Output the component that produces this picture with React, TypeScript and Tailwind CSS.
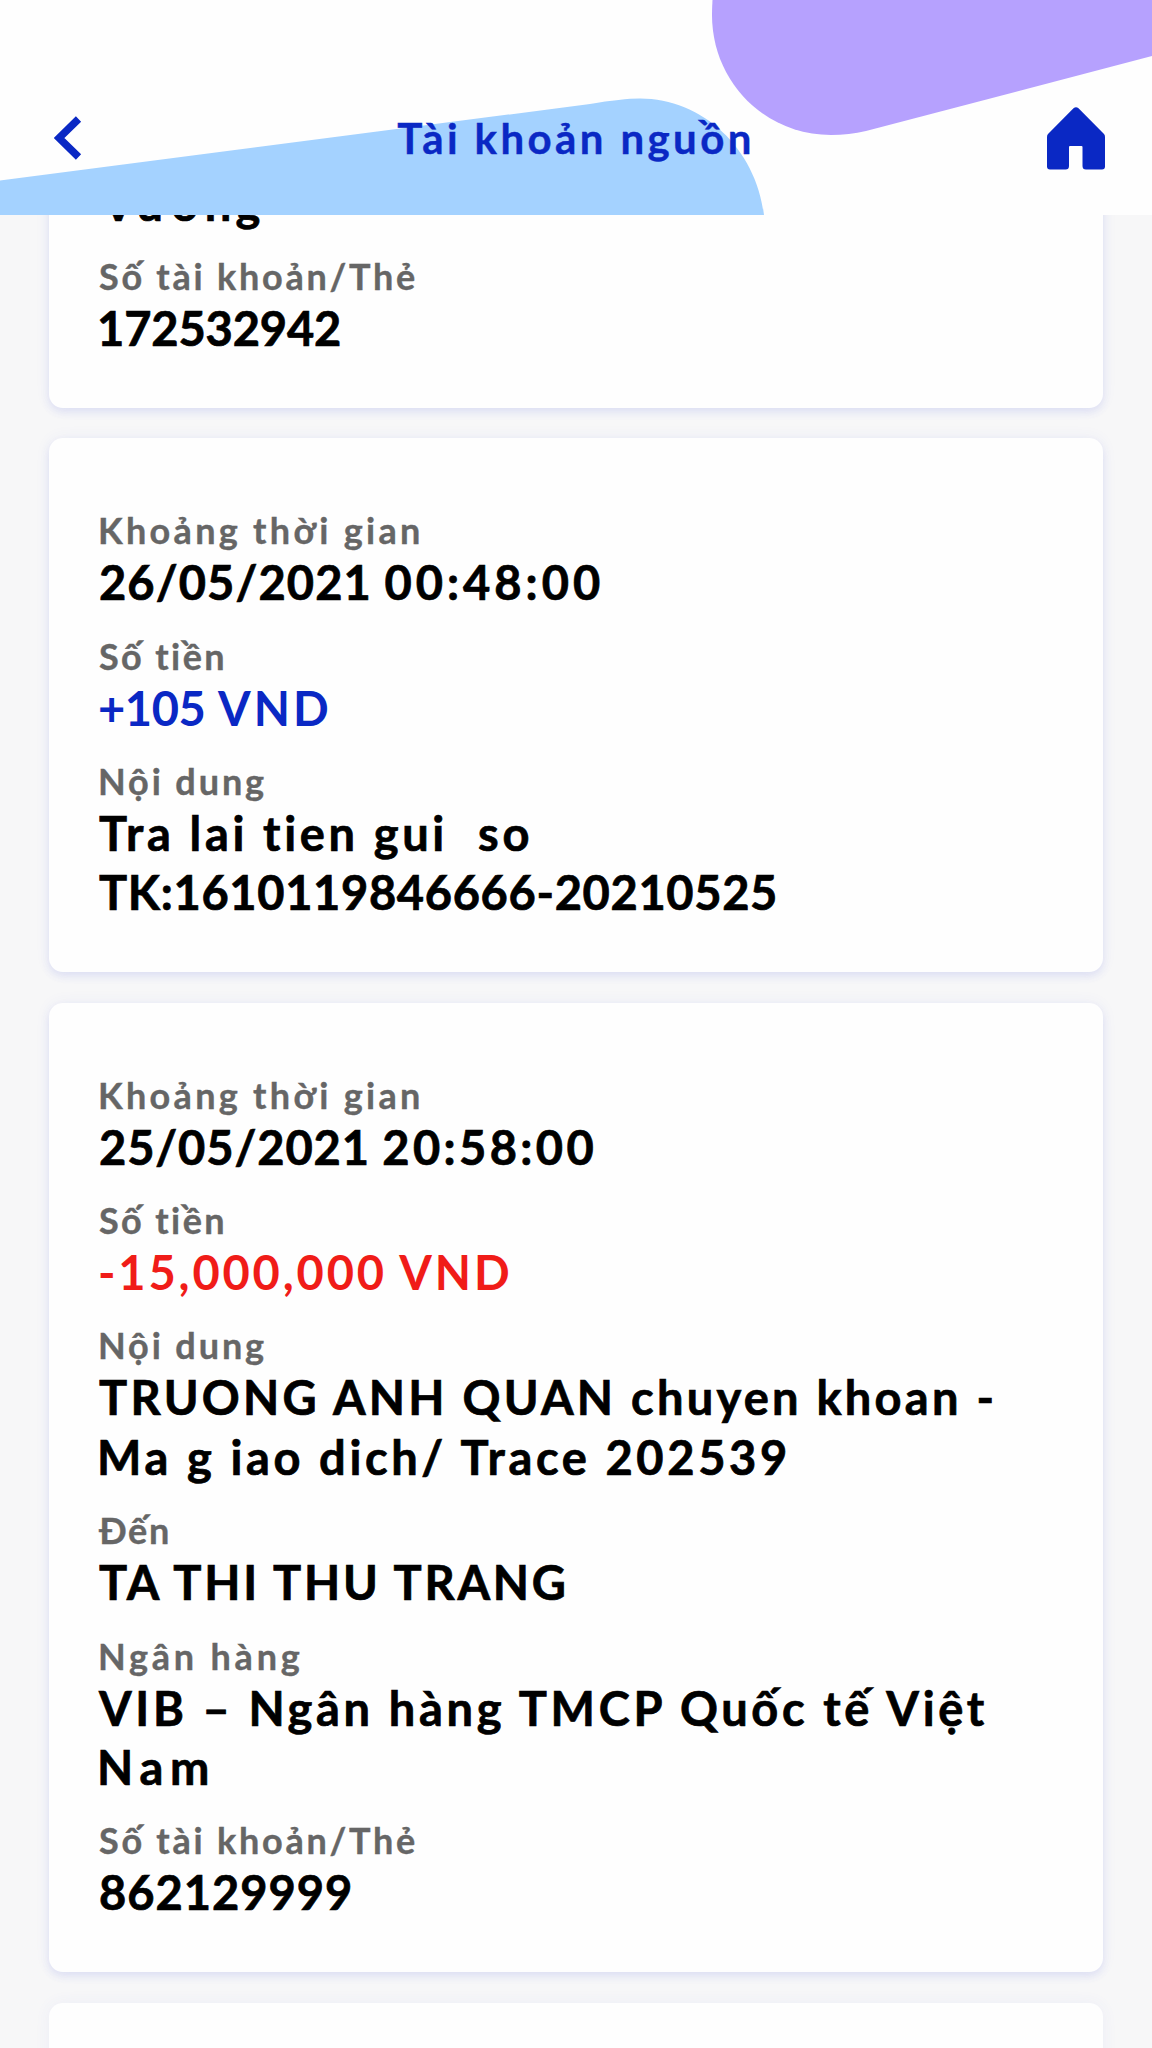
import clsx from 'clsx'

type Line = { text: string; className: string; time?: string; timeClass?: string }

type Field = { label?: string; labelClass?: string; lines: Line[] }

const LABELS = {
  time: { label: 'Khoảng thời gian', labelClass: 'tracking-[3.3px] -ml-px' },
  amount: { label: 'Số tiền', labelClass: 'tracking-[2.4px]' },
  content: { label: 'Nội dung', labelClass: 'tracking-[2.9px] -ml-px' },
  to: { label: 'Đến', labelClass: 'tracking-[1.6px]' },
  bank: { label: 'Ngân hàng', labelClass: 'tracking-[3.8px] -ml-px' },
  account: { label: 'Số tài khoản/Thẻ', labelClass: 'tracking-[2.75px]' },
}

const transactions: Field[][] = [
  [
    { lines: [{ text: 'Vương', className: 'tracking-[4.2px] ml-[3px]' }] },
    { ...LABELS.account, lines: [{ text: '172532942', className: 'tracking-[-0.13px] -ml-[2px]' }] },
  ],
  [
    {
      ...LABELS.time,
      lines: [
        { text: '26/05/2021 ', className: 'tracking-[1.1px]', time: '00:48:00', timeClass: 'tracking-[4px]' },
      ],
    },
    {
      ...LABELS.amount,
      lines: [{ text: '+105', className: 'tracking-[-0.4px] -ml-px text-[#0a28c4]', time: ' VND', timeClass: 'tracking-[3px]' }],
    },
    {
      ...LABELS.content,
      lines: [
        { text: 'Tra lai tien gui  so', className: 'tracking-[3.65px]' },
        { text: 'TK:1610119846666-20210525', className: 'tracking-[0.66px]' },
      ],
    },
  ],
  [
    {
      ...LABELS.time,
      lines: [
        { text: '25/05/2021 ', className: 'tracking-[0.9px]', time: '20:58:00', timeClass: 'tracking-[3.4px]' },
      ],
    },
    {
      ...LABELS.amount,
      lines: [{ text: '-15,000,000 VND', className: 'tracking-[2.84px] -ml-px text-[#f01c18]' }],
    },
    {
      ...LABELS.content,
      lines: [
        { text: 'TRUONG ANH QUAN chuyen khoan -', className: 'tracking-[3.25px]' },
        { text: 'Ma g iao dich/ Trace 202539', className: 'tracking-[3.62px] -ml-[2px]' },
      ],
    },
    { ...LABELS.to, lines: [{ text: 'TA THI THU TRANG', className: 'tracking-[2.8px]' }] },
    {
      ...LABELS.bank,
      lines: [
        { text: 'VIB – Ngân hàng TMCP Quốc tế Việt', className: 'tracking-[3.65px]' },
        { text: 'Nam', className: 'tracking-[6.8px] -ml-[2px]' },
      ],
    },
    { ...LABELS.account, lines: [{ text: '862129999', className: 'tracking-[1px]' }] },
  ],
]

function Header() {
  return (
    <header className="relative z-10 h-[215px] shrink-0 overflow-hidden bg-[#fefefe] pt-[61px] text-[#0a28c4]">
      <svg className="absolute inset-0" width="1152" height="215" viewBox="0 0 1152 215" aria-hidden="true">
        <path d="M0 180.5 L590 104 Q622 98.500 640 98.500 C702 98.500 756 148 764 215 H0 Z" fill="#a4d2ff" />
        <path d="M712.500 0 Q712 8 712 15 C712 82 765 135 831 135 Q849 135 866 131 L1152 56 V0 Z" fill="#b6a1fe" />
      </svg>
      <div className="relative flex h-full items-center justify-between pl-[54px] pr-[47px]">
        <button className="w-[51px]" aria-label="Quay lại">
          <svg width="28" height="44" viewBox="0 0 28 44" fill="none">
            <path d="M24.500 3 L5 22 L24.500 41" stroke="currentColor" strokeWidth="7.500" />
          </svg>
        </button>
        <h1 className="text-[42px] font-bold leading-none tracking-[3.4px] [-webkit-text-stroke:0.4px]">
          Tài khoản nguồn
        </h1>
        <button aria-label="Trang chủ">
          <svg width="58" height="63" viewBox="0 0 58 63" fill="currentColor">
            <path d="M26.500 1.200 Q29 -0.800 31.500 1.200 L57 27 Q58 28.200 58 30 V59.500 Q58 62.500 55 62.500 H39 Q35.500 62.500 35.500 59 V40 Q35.500 39 34.500 39 H23 Q22 39 22 40 V59 Q22 62.500 18.500 62.500 H3 Q0 62.500 0 59.500 V30 Q0 28.200 1 27 Z" />
          </svg>
        </button>
      </div>
    </header>
  )
}

function TransactionCard({ fields, first }: { fields: Field[]; first: boolean }) {
  return (
    <section
      className={clsx(
        'flex flex-col gap-[20.7px] rounded-[14px] bg-[#fefefe] px-[50px] pb-[49.4px] shadow-[0_4px_8px_rgba(70,90,220,0.12),0_0_16px_rgba(70,90,220,0.06)]',
        first ? '-mt-[41.4px]' : 'pt-[70px]',
      )}
    >
      {fields.map((field, i) => (
        <div key={i}>
          {field.label && (
            <p
              className={clsx(
                'mb-px text-[36px] font-bold leading-[44px] text-[#666] [-webkit-text-stroke:0.4px]',
                field.labelClass,
              )}
            >
              {field.label}
            </p>
          )}
          {field.lines.map((line) => (
            <p
              key={line.text}
              className={clsx(
                'whitespace-pre text-[47px] font-bold leading-[59.6px]',
                line.className,
                !line.className.includes('text-[') && 'text-black [-webkit-text-stroke:0.7px]',
              )}
            >
              {line.text}
              {line.time && <span className={line.timeClass}>{line.time}</span>}
            </p>
          ))}
        </div>
      ))}
    </section>
  )
}

export default function App() {
  return (
    <div className="flex h-[2048px] w-[1152px] flex-col overflow-hidden bg-[#f7f7f8] font-[Lato,sans-serif]">
      <Header />
      <main className="flex flex-col gap-[30.4px] px-[49px]">
        {transactions.map((fields, i) => (
          <TransactionCard key={i} fields={fields} first={i === 0} />
        ))}
        <section className="h-[160px] shrink-0 rounded-[14px] bg-[#fefefe] shadow-[0_0_16px_rgba(70,90,220,0.06)]" />
      </main>
    </div>
  )
}
